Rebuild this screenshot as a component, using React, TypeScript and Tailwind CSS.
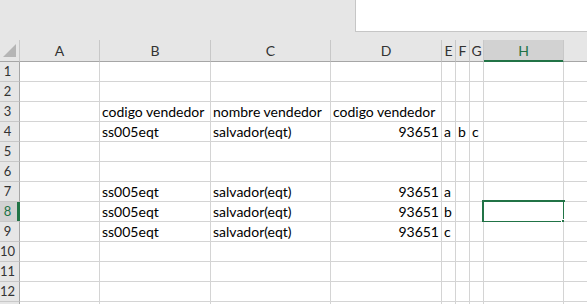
import React from "react";

const cols = ["A", "B", "C", "D", "E", "F", "G", "H", "I"];

type Cell = { t: string; right?: boolean };
const data: Record<number, Record<string, Cell>> = {
  3: {
    B: { t: "codigo vendedor" },
    C: { t: "nombre vendedor" },
    D: { t: "codigo vendedor" },
  },
  4: {
    B: { t: "ss005eqt" },
    C: { t: "salvador(eqt)" },
    D: { t: "93651", right: true },
    E: { t: "a" },
    F: { t: "b" },
    G: { t: "c" },
  },
  7: {
    B: { t: "ss005eqt" },
    C: { t: "salvador(eqt)" },
    D: { t: "93651", right: true },
    E: { t: "a" },
  },
  8: {
    B: { t: "ss005eqt" },
    C: { t: "salvador(eqt)" },
    D: { t: "93651", right: true },
    E: { t: "b" },
  },
  9: {
    B: { t: "ss005eqt" },
    C: { t: "salvador(eqt)" },
    D: { t: "93651", right: true },
    E: { t: "c" },
  },
};

const font = { fontFamily: "Lato, 'Liberation Sans', sans-serif" };

export default function App() {
  const rows = Array.from({ length: 13 }, (_, i) => i + 1);
  return (
    <div className="w-[587px] h-[304px] overflow-hidden bg-[#e6e6e6]" style={font}>
      {/* top area */}
      <div className="h-[40px] flex justify-end">
        <div className="w-[232px] h-[32px] bg-white border-l border-b border-[#c6c6c6]" />
      </div>
      {/* grid */}
      <div className="grid grid-cols-[20px_80px_111px_120px_111px_14px_14px_14px_80px_1fr] auto-rows-[20px] grid-rows-[22px]">
        {/* header row */}
        <div className="relative h-[22px] border-r border-b border-r-[#c8c8c8] border-b-[#a6a6a6] bg-[#e6e6e6]">
          <svg className="absolute left-[3px] top-[4px]" width="13" height="13" viewBox="0 0 13 13">
            <polygon points="13,0 13,13 0,13" fill="#b5b5b5" />
          </svg>
        </div>
        {cols.map((c) => {
          const sel = c === "H";
          return (
            <div
              key={c}
              className={
                "relative h-[22px] flex items-center justify-center text-[14px] border-b " +
                (c === "I" ? "" : "border-r border-r-[#c8c8c8] ") +
                (sel
                  ? "bg-[#d2d2d2] text-[#217346] border-b-[#217346]"
                  : "bg-[#e6e6e6] text-[#333333] border-b-[#a6a6a6]")
              }
            >
              {c === "I" ? "" : c}
              {sel && <div className="absolute left-0 right-0 bottom-[-1px] h-[2px] bg-[#217346]" />}
            </div>
          );
        })}
        {rows.map((r) => {
          const rowSel = r === 8;
          return (
            <React.Fragment key={r}>
              <div
                className={
                  "relative h-[20px] flex items-center justify-center pr-[4px] text-[13px] border-r border-b border-r-[#a6a6a6] border-b-[#c8c8c8] " +
                  (rowSel ? "bg-[#d2d2d2] text-[#217346]" : "bg-[#e6e6e6] text-[#333333]")
                }
              >
                {r}
                {rowSel && <div className="absolute right-[-1px] top-0 bottom-0 w-[3px] bg-[#217346]" />}
              </div>
              {cols.map((c) => {
                const cell = data[r]?.[c];
                const isSel = r === 8 && c === "H";
                return (
                  <div
                    key={c}
                    className={
                      "relative h-[20px] bg-white border-b border-[#d4d4d4] flex items-center text-[14px] text-[#000000] whitespace-nowrap " +
                      (c === "I" ? "" : "border-r ") +
                      (cell?.right ? "justify-end pr-[2px]" : "pl-[2px]") +
                      (c === "B" || c === "C" ? " overflow-visible z-10" : "")
                    }
                  >
                    {cell?.t}
                    {isSel && (
                      <>
                        <div className="absolute left-[-2px] top-[-2px] right-[-2px] bottom-[-2px] border-2 border-[#217346]" />
                        <div className="absolute right-[-4px] bottom-[-4px] w-[6px] h-[6px] bg-[#217346] border border-white" />
                      </>
                    )}
                  </div>
                );
              })}
            </React.Fragment>
          );
        })}
      </div>
    </div>
  );
}
